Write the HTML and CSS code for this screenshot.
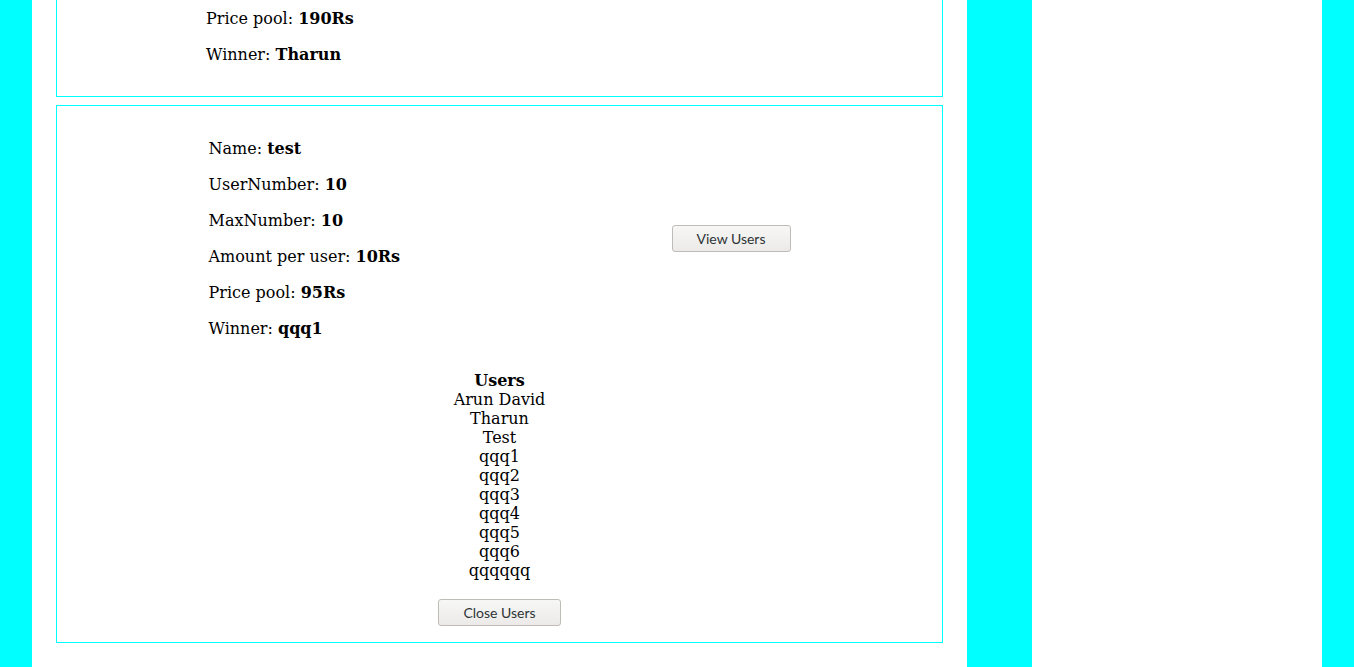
FILE: index.html
```html
<!DOCTYPE html>
<html lang="en">
<head>
<meta charset="utf-8">
<title>Contests</title>
<link rel="stylesheet" href="styles.css">
</head>
<body>
<div class="layout">
  <main class="main">
    <section class="card card--cut">
      <div class="info info--cut">
        <p>Price pool: <b>190Rs</b></p>
        <p>Winner: <b>Tharun</b></p>
      </div>
    </section>
    <section class="card">
      <div class="row">
        <div class="info">
          <p>Name: <b>test</b></p>
          <p>UserNumber: <b>10</b></p>
          <p>MaxNumber: <b>10</b></p>
          <p>Amount per user: <b>10Rs</b></p>
          <p>Price pool: <b>95Rs</b></p>
          <p>Winner: <b>qqq1</b></p>
        </div>
        <button class="btn" type="button">View Users</button>
      </div>
      <div class="users">
        <div class="users-title">Users</div>
        <div>Arun David</div>
        <div>Tharun</div>
        <div>Test</div>
        <div>qqq1</div>
        <div>qqq2</div>
        <div>qqq3</div>
        <div>qqq4</div>
        <div>qqq5</div>
        <div>qqq6</div>
        <div>qqqqqq</div>
        <button class="btn btn--close" type="button">Close Users</button>
      </div>
    </section>
  </main>
  <aside class="side"></aside>
</div>
</body>
</html>
```

FILE: styles.css
```css
html, body {
  margin: 0;
  padding: 0;
}
body {
  background: #00ffff;
  font-family: "DejaVu Serif", serif;
  font-size: 16px;
  color: #000;
}
.layout {
  display: grid;
  grid-template-columns: 935px 290px;
  column-gap: 65px;
  padding: 0 32px;
  min-height: 100vh;
}
.main {
  background: #fff;
  padding: 0 24px;
}
.side {
  background: #fff;
}
.card {
  border: 1px solid #00ffff;
  padding: 16px 0;
  margin-bottom: 8px;
}
.card--cut {
  border-top: 0;
  padding: 9px 0 15px;
}
.row {
  display: flex;
  justify-content: space-around;
  align-items: center;
}
.info {
  width: 160px;
  white-space: nowrap;
}
.info p {
  margin: 17px 0;
  line-height: 19px;
}
.info--cut {
  width: auto;
  padding-left: 149px;
}
.info--cut p:first-child {
  margin-top: 0;
}
.users {
  margin-top: 16px;
  text-align: center;
  line-height: 19px;
}
.users-title {
  font-weight: bold;
}
.btn {
  font-family: Lato, "Open Sans", sans-serif;
  font-size: 14px;
  color: #2e3436;
  height: 27px;
  box-sizing: border-box;
  padding: 0 24px;
  border: 1px solid #bfbcb8;
  border-radius: 3px;
  background: linear-gradient(#f7f7f6, #ebeae8);
  line-height: 25px;
}
.btn--close {
  margin-top: 19px;
  display: inline-block;
  vertical-align: top;
}
```
